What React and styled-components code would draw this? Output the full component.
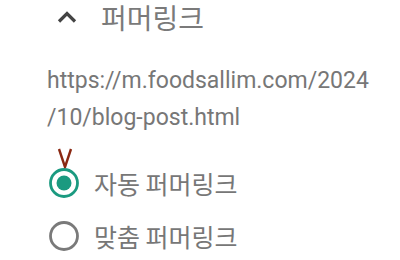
import React from 'react';
import styled, { createGlobalStyle } from 'styled-components';

const GlobalStyle = createGlobalStyle`
    html, body {
        margin: 0;
        padding: 0;
        background: #ffffff;
    }
    body {
        font-family: Roboto, "Noto Sans CJK KR", sans-serif;
    }
`

const Wrapper = styled.div`
    width: 400px;
    height: 260px;
    overflow: hidden;
    background: #ffffff;
`

const Header = styled.div`
    display: flex;
    align-items: center;
    height: 34px;
    padding-left: 57px;
    gap: 24px;
`

const Title = styled.span`
    font-family: "Noto Sans CJK KR", sans-serif;
    font-size: 28px;
    line-height: 1;
    color: #7a7a7a;
`

const Url = styled.div`
    margin-top: 28px;
    padding-left: 47px;
    font-family: Roboto, sans-serif;
    font-size: 23px;
    line-height: 37px;
    color: #777777;
`

const List = styled.div`
    display: flex;
    flex-direction: column;
    margin-top: 20px;
    padding-left: 47px;
`

const Option = styled.label`
    position: relative;
    display: flex;
    align-items: center;
    height: 53px;
    gap: 13px;
    cursor: pointer;
`

const OptionLabel = styled.span`
    font-family: "Noto Sans CJK KR", sans-serif;
    font-size: 25px;
    color: #777777;
`

const CheckMark = styled.svg`
    position: absolute;
    left: 10px;
    top: -9px;
`

const Chevron = () => (
    <svg width="20" height="12" viewBox="0 0 20 12">
        <path d="M2 10.5 L10 2.5 L18 10.5" fill="none" stroke="#444" strokeWidth="3.2" />
    </svg>
)

const RadioIcon = ({ checked }) => (
    <svg width="34" height="34" viewBox="0 0 34 34">
        <circle
            cx="17"
            cy="17"
            r="13.5"
            fill="none"
            stroke={checked ? '#1b9a80' : '#7a7a7a'}
            strokeWidth="2.8"
        />
        {checked && <circle cx="17" cy="17" r="7.5" fill="#1b9a80" />}
    </svg>
)

const options = [
    { id: 'auto', label: '자동 퍼머링크' },
    { id: 'custom', label: '맞춤 퍼머링크' },
]

const App = () => {
    const selected = 'auto'

    return (
        <Wrapper>
            <GlobalStyle />
            <Header>
                <Chevron />
                <Title>퍼머링크</Title>
            </Header>
            <Url>
                https://m.foodsallim.com/2024
                <br />
                /10/blog-post.html
            </Url>
            <List>
                {options.map(option => (
                    <Option key={option.id}>
                        <RadioIcon checked={selected === option.id} />
                        <OptionLabel>{option.label}</OptionLabel>
                        {selected === option.id && (
                            <CheckMark width="16" height="22" viewBox="0 0 16 22">
                                <path d="M2 2 L8 20 L14 2" fill="none" stroke="#8a2812" strokeWidth="2.4" strokeLinejoin="round" />
                            </CheckMark>
                        )}
                    </Option>
                ))}
            </List>
        </Wrapper>
    )
}

export default App;
